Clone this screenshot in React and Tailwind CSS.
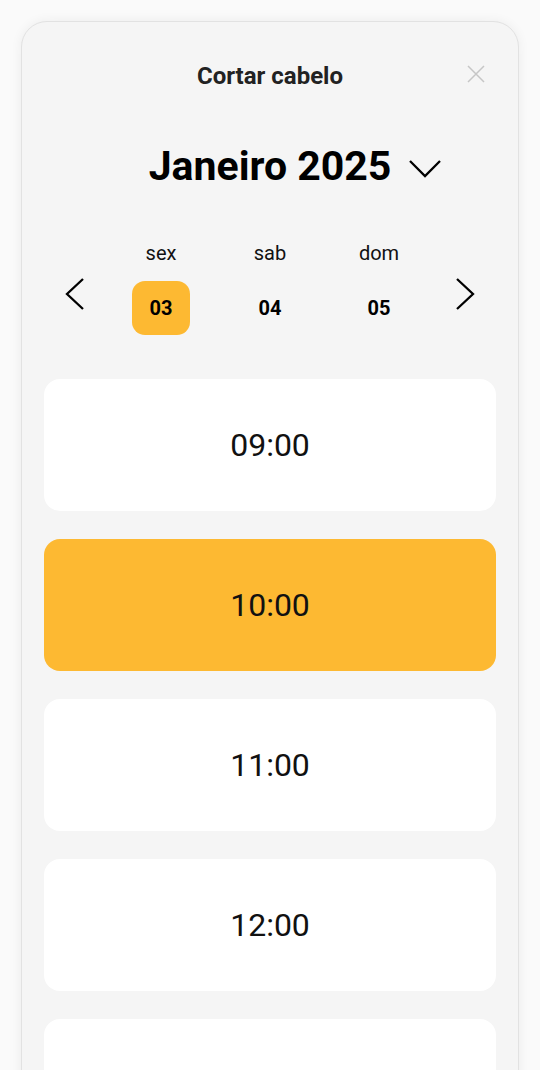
import React, { useState } from 'react'

const days = [
    { label: 'sex', num: '03' },
    { label: 'sab', num: '04' },
    { label: 'dom', num: '05' },
]

const times = ['09:00', '10:00', '11:00', '12:00', '13:00']

const App = () => {
    const [day, setDay] = useState('03')
    const [time, setTime] = useState('10:00')

    return (
        <div className="h-[1070px] bg-[#fafafa] pt-[21px] px-[21px] overflow-hidden" style={{ fontFamily: 'Roboto, sans-serif' }}>
            <div className="h-[1100px] bg-[#f5f5f5] border border-[#e2e2e2] rounded-[26px] shadow-[0_0_12px_rgba(0,0,0,0.06)] px-[22px]">
                <div className="relative flex items-center justify-center h-[108px]">
                    <h2 className="text-[24px] font-bold text-[#222]">Cortar cabelo</h2>
                    <button className="absolute right-[10px] top-[42px]">
                        <svg width="20" height="20" viewBox="0 0 20 20" fill="none" stroke="#c6c6c6" strokeWidth="1.5">
                            <path d="M2 2 L18 18 M18 2 L2 18" />
                        </svg>
                    </button>
                </div>

                <div className="flex items-center justify-center gap-[17px] h-[74px] pl-[51px]">
                    <span className="text-[41px] font-bold text-black">Janeiro 2025</span>
                    <svg width="34" height="20" viewBox="0 0 34 20" fill="none" stroke="#000" strokeWidth="2.3" className="mt-[2px]">
                        <polyline points="2,3 17,18 32,3" />
                    </svg>
                </div>

                <div className="flex items-end justify-between mt-[37px] px-[21px]">
                    <button className="mb-[24px]">
                        <svg width="20" height="34" viewBox="0 0 20 34" fill="none" stroke="#000" strokeWidth="2.3">
                            <polyline points="18,2 2,17 18,32" />
                        </svg>
                    </button>
                    <div className="flex gap-[51px]">
                        {days.map((d) => (
                            <div key={d.num} className="flex flex-col items-center w-[58px]">
                                <span className="text-[20px] leading-[24px] text-[#111]">{d.label}</span>
                                <button
                                    onClick={() => setDay(d.num)}
                                    className={`mt-[16px] w-[58px] h-[54px] rounded-[13px] text-[20px] font-bold text-black ${day === d.num ? 'bg-[#fdb932]' : ''}`}
                                >
                                    {d.num}
                                </button>
                            </div>
                        ))}
                    </div>
                    <button className="mb-[24px]">
                        <svg width="20" height="34" viewBox="0 0 20 34" fill="none" stroke="#000" strokeWidth="2.3">
                            <polyline points="2,2 18,17 2,32" />
                        </svg>
                    </button>
                </div>

                <div className="flex flex-col gap-[28px] mt-[44px]">
                    {times.map((t) => (
                        <button
                            key={t}
                            onClick={() => setTime(t)}
                            className={`h-[132px] shrink-0 rounded-[16px] text-[32px] text-[#111] flex items-center justify-center ${time === t ? 'bg-[#fdb932]' : 'bg-white'}`}
                        >
                            {t !== '13:00' && t}
                        </button>
                    ))}
                </div>
            </div>
        </div>
    )
}

export default App
